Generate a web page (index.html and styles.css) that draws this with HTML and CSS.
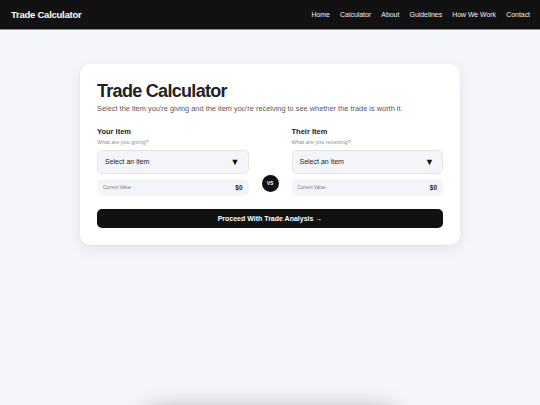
FILE: index.html
```html
<!DOCTYPE html>
<html lang="en">
<head>
<meta charset="utf-8">
<title>Trade Calculator</title>
<link rel="stylesheet" href="styles.css">
</head>
<body>
<div class="page">
  <header class="navbar">
    <div class="brand">Trade Calculator</div>
    <nav class="nav">
      <a href="#">Home</a>
      <a href="#">Calculator</a>
      <a href="#">About</a>
      <a href="#">Guidelines</a>
      <a href="#">How We Work</a>
      <a href="#">Contact</a>
    </nav>
  </header>
  <main class="main">
    <section class="card">
      <h1 class="title">Trade Calculator</h1>
      <p class="subtitle">Select the item you're giving and the item you're receiving to see whether the trade is worth it.</p>
      <div class="trade">
        <div class="side">
          <div class="label">Your Item</div>
          <div class="hint">What are you giving?</div>
          <div class="select"><span>Select an item</span><span class="arrow">▼</span></div>
          <div class="value"><span class="value-label">Current Value</span><span class="value-num">$0</span></div>
        </div>
        <div class="vs-col"><div class="vs">VS</div></div>
        <div class="side">
          <div class="label">Their Item</div>
          <div class="hint">What are you receiving?</div>
          <div class="select"><span>Select an item</span><span class="arrow">▼</span></div>
          <div class="value"><span class="value-label">Current Value</span><span class="value-num">$0</span></div>
        </div>
      </div>
      <button class="proceed">Proceed With Trade Analysis →</button>
    </section>
    <div class="next-card"></div>
  </main>
</div>
</body>
</html>
```

FILE: styles.css
```css
* { box-sizing: border-box; }
html, body { margin: 0; padding: 0; }
body {
  font-family: "Liberation Sans", Arial, sans-serif;
  background: #f5f6fa;
  color: #222;
}
.page {
  height: 100vh;
  overflow: hidden;
}
.navbar {
  height: 30px;
  background: #111111;
  border-bottom: 1px solid #8c8c8c;
  display: flex;
  align-items: center;
  justify-content: space-between;
  padding: 0 10px 0 11px;
}
.brand {
  color: #ffffff;
  font-weight: 700;
  font-size: 9.5px;
  letter-spacing: -0.25px;
}
.nav {
  display: flex;
  gap: 10.2px;
}
.nav a {
  color: #f2f2f2;
  text-decoration: none;
  font-size: 6.9px;
}
.main {
  display: flex;
  flex-direction: column;
  align-items: center;
  padding-top: 34px;
}
.card {
  width: 380px;
  background: #ffffff;
  border-radius: 10px;
  padding: 17px;
  box-shadow: 0 4px 16px rgba(20, 25, 50, 0.08), 0 1px 3px rgba(20, 25, 50, 0.04);
}
.title {
  margin: 0;
  font-size: 18px;
  line-height: 20px;
  font-weight: 700;
  letter-spacing: -0.7px;
  color: #222222;
}
.subtitle {
  margin: 3px 0 0;
  font-size: 7.4px;
  line-height: 9px;
  color: #555a60;
}
.trade {
  margin-top: 14px;
  display: grid;
  grid-template-columns: 1fr 43px 1fr;
}
.side {
  display: flex;
  flex-direction: column;
}
.label {
  font-size: 7.5px;
  line-height: 9px;
  font-weight: 700;
  color: #1c1c1c;
}
.hint {
  margin-top: 2.7px;
  font-size: 5.5px;
  line-height: 7px;
  color: #8a8f96;
}
.select {
  margin-top: 4.4px;
  height: 23.5px;
  background: #f4f5f9;
  border: 1px solid #e2e4ea;
  border-radius: 5px;
  display: flex;
  align-items: center;
  justify-content: space-between;
  padding: 0 8px 0 7px;
  font-size: 7px;
  color: #1e1e1e;
}
.arrow {
  font-size: 9px;
  color: #111;
}
.value {
  margin-top: 5.5px;
  height: 16.5px;
  background: #f4f5fa;
  border-radius: 5px;
  display: flex;
  align-items: center;
  justify-content: space-between;
  padding: 0 6px 0 6px;
}
.value-label {
  font-size: 4.6px;
  color: #777c84;
}
.value-num {
  font-size: 6.5px;
  font-weight: 700;
  color: #222;
}
.vs-col {
  display: flex;
  justify-content: center;
  align-items: flex-end;
  padding-bottom: 4px;
}
.vs {
  width: 17px;
  height: 17px;
  border-radius: 50%;
  background: #111111;
  color: #ffffff;
  font-size: 5px;
  font-weight: 700;
  display: flex;
  align-items: center;
  justify-content: center;
}
.proceed {
  margin-top: 13.5px;
  width: 100%;
  height: 19px;
  border: none;
  border-radius: 5px;
  background: #111111;
  color: #ffffff;
  font-family: inherit;
  font-size: 7px;
  font-weight: 700;
  cursor: pointer;
}
.next-card {
  margin-top: 164px;
  width: 250px;
  height: 60px;
  border-radius: 12px;
  background: #ffffff;
  box-shadow: 0 0 24px rgba(0, 0, 0, 0.28);
}
```
